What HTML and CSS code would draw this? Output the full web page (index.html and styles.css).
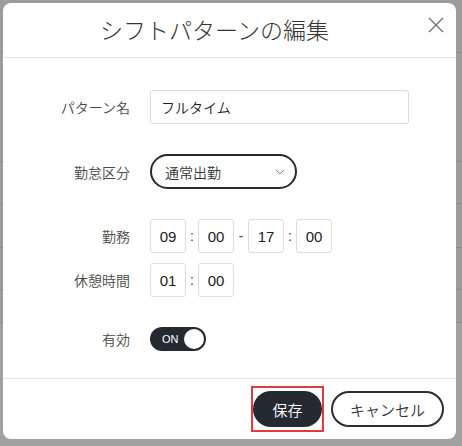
FILE: index.html
```html
<!DOCTYPE html>
<html lang="ja">
<head>
<meta charset="utf-8">
<title>シフトパターンの編集</title>
<link rel="stylesheet" href="styles.css">
</head>
<body>
<div class="backdrop">
  <div class="bg-row r1"></div>
  <div class="bg-row r2"></div>
  <div class="bg-row r3"></div>
  <div class="bg-row r4"></div>
  <div class="bg-row r5"></div>
  <div class="bg-row r6"></div>
  <div class="bg-rest"></div>
</div>
<div class="dialog">
  <div class="dlg-header">
    <div class="dlg-title">シフトパターンの編集</div>
    <div class="dlg-close">
      <svg width="16" height="16" viewBox="0 0 16 16"><path d="M1 1 L15 15 M15 1 L1 15" stroke="#6f6f6f" stroke-width="1.3" fill="none"/></svg>
    </div>
  </div>
  <div class="dlg-body">
    <div class="row row-name">
      <div class="label">パターン名</div>
      <div class="text-input">フルタイム</div>
    </div>
    <div class="row row-select">
      <div class="label">勤怠区分</div>
      <div class="select">
        <span>通常出勤</span>
        <svg class="chev" width="10" height="6" viewBox="0 0 10 6"><path d="M0.8 0.8 L5 4.8 L9.2 0.8" stroke="#666" stroke-width="0.9" fill="none"/></svg>
      </div>
    </div>
    <div class="row row-time">
      <div class="label">勤務</div>
      <div class="times">
        <div class="tbox">09</div><div class="sep">:</div><div class="tbox">00</div><div class="sep dash">-</div><div class="tbox">17</div><div class="sep">:</div><div class="tbox">00</div>
      </div>
    </div>
    <div class="row row-break">
      <div class="label">休憩時間</div>
      <div class="times">
        <div class="tbox">01</div><div class="sep">:</div><div class="tbox">00</div>
      </div>
    </div>
    <div class="row row-toggle">
      <div class="label">有効</div>
      <div class="toggle"><span class="on">ON</span><span class="knob"></span></div>
    </div>
  </div>
  <div class="dlg-footer">
    <div class="highlight"><button class="btn btn-save">保存</button></div>
    <button class="btn btn-cancel">キャンセル</button>
  </div>
</div>
</body>
</html>
```
FILE: styles.css
```css
* { box-sizing: border-box; }
html, body { margin: 0; padding: 0; }
body {
  width: 462px;
  height: 446px;
  overflow: hidden;
  background: #9c9c9c;
  font-family: "Liberation Sans", "Noto Sans CJK JP", sans-serif;
  font-weight: 350;
  position: relative;
}
.backdrop { display: flex; flex-direction: column; height: 446px; }
.bg-row { border-bottom: 1px solid #8a8a8a; flex: none; }
.r1 { height: 53px; }
.r2 { height: 109px; }
.r3 { height: 42px; }
.r4 { height: 44px; }
.r5 { height: 42px; }
.r6 { height: 33px; }
.bg-rest { flex: 1; background: #a1a1a1; }

.dialog {
  position: absolute;
  left: 3px;
  top: 3px;
  width: 453px;
  height: 436px;
  background: #fff;
  border-radius: 8px;
  display: flex;
  flex-direction: column;
  color: #333;
}
.dlg-header {
  height: 55px;
  display: flex;
  align-items: center;
  border-bottom: 1px solid #e3e3e3;
  flex: none;
}
.dlg-title {
  flex: 1;
  text-align: center;
  font-size: 23px;
  font-weight: 300;
  color: #333;
  padding-left: 4px;
  padding-bottom: 2px;
}
.dlg-close {
  width: 34px;
  height: 40px;
  display: flex;
  align-items: center;
  padding-left: 6px;
  margin-top: -11px;
}
.dlg-body {
  flex: none;
  padding: 32px 0 27px;
  display: flex;
  flex-direction: column;
}
.row { display: flex; align-items: center; gap: 20px; }
.label {
  width: 127px;
  text-align: right;
  font-size: 14px;
  color: #4a4a4a;
}
.row-select { margin-top: 30px; }
.row-time { margin-top: 30px; }
.row-break { margin-top: 10px; }
.row-toggle { margin-top: 30px; }

.text-input {
  width: 259px;
  height: 34px;
  border: 1px solid #dcdcdc;
  border-radius: 3px;
  padding-left: 10px;
  display: flex;
  align-items: center;
  font-size: 14px;
  color: #222;
}
.select {
  width: 147px;
  height: 35px;
  border: 2px solid #2a2a2a;
  border-radius: 18px;
  display: flex;
  align-items: center;
  justify-content: space-between;
  padding: 0 9px 0 13px;
  font-size: 14px;
  color: #333;
}
.chev { margin-right: 1px; margin-top: 1px; }
.times { display: flex; align-items: center; }
.tbox {
  width: 36px;
  height: 34px;
  border: 1px solid #dedede;
  border-radius: 3px;
  display: flex;
  align-items: center;
  justify-content: center;
  font-size: 15px;
  color: #222;
  font-weight: 400;
}
.sep { width: 12px; text-align: center; font-size: 14px; color: #444; }
.sep.dash { width: 14px; }

.toggle {
  width: 56px;
  height: 24px;
  border-radius: 12px;
  background: #252a32;
  display: flex;
  align-items: center;
  justify-content: space-between;
  padding: 0 2px 0 12px;
}
.toggle .on { color: #fff; font-size: 11px; font-weight: 400; }
.toggle .knob {
  width: 20px;
  height: 20px;
  border-radius: 50%;
  background: #fff;
}

.dlg-footer {
  flex: 1;
  border-top: 1px solid #e6e6e6;
  display: flex;
  align-items: center;
  justify-content: flex-end;
  padding-right: 12px;
  gap: 7px;
}
.highlight {
  border: 2px solid #e53a3a;
  padding: 3px 0;
  display: flex;
}
.btn {
  font-family: "Liberation Sans", "Noto Sans CJK JP", sans-serif;
  font-weight: 350;
  font-size: 15px;
  height: 36px;
  border-radius: 18px;
  margin: 0;
  padding: 0;
  cursor: pointer;
}
.btn-save {
  width: 69px;
  background: #252a32;
  color: #fff;
  border: none;
}
.btn-cancel {
  width: 113px;
  background: #fff;
  color: #333;
  border: 2px solid #2e2e2e;
}
```
